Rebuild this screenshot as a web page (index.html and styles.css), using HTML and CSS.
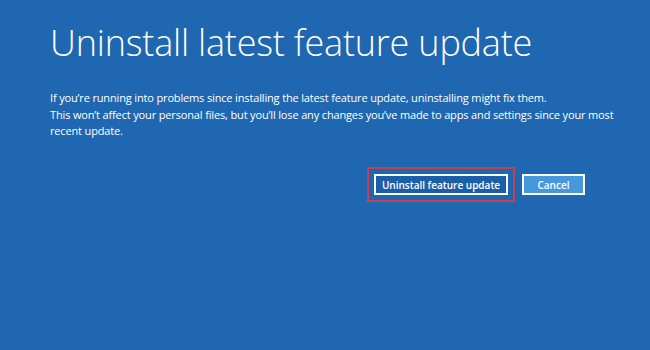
FILE: index.html
```html
<!DOCTYPE html>
<html lang="en">
<head>
    <meta charset="UTF-8">
    <title>Uninstall latest feature update</title>
    <link rel="stylesheet" href="styles.css">
</head>
<body>
    <div class="screen">
        <h1>Uninstall latest feature update</h1>

        <div class="message">
            <p>If you’re running into problems since installing the latest feature update, uninstalling might fix them.</p>
            <p>This won’t affect your personal files, but you’ll lose any changes you’ve made to apps and settings since your most recent update.</p>
        </div>

        <!-- Actions -->
        <div class="actions">
            <span class="highlight">
                <button class="btn primary">Uninstall feature update</button>
            </span>
            <button class="btn secondary">Cancel</button>
        </div>
    </div>
</body>
</html>
```

FILE: styles.css
```css
html, body {
    margin: 0;
    padding: 0;
    height: 100%;
}

body {
    background-color: #1f67b1;
    color: #fff;
    font-family: "Open Sans", "Noto Sans", sans-serif;
}

.screen {
    width: 535px;
    padding: 21px 0 0 50px;
}

h1 {
    margin: 0;
    font-size: 36px;
    font-weight: 300;
    line-height: 44px;
    letter-spacing: -0.2px;
}

.message {
    width: 570px;
    margin-top: 25px;
    font-size: 11px;
    line-height: 16px;
    letter-spacing: -0.15px;
}

.message p {
    margin: 0 0 1px 0;
}

.actions {
    display: flex;
    justify-content: flex-end;
    align-items: center;
    gap: 7px;
    margin-top: 28px;
}

.highlight {
    display: flex;
    padding: 5px;
    border: 2px solid #c8404f;
}

.btn {
    height: 21px;
    padding: 0;
    border: 2px solid #fff;
    color: #fff;
    font-family: "Open Sans", "Noto Sans", sans-serif;
    font-size: 10px;
    font-weight: 600;
    cursor: pointer;
}

.primary {
    width: 134px;
    background-color: #1c5fa9;
}

.secondary {
    width: 63px;
    background-color: #4598dc;
}
```
